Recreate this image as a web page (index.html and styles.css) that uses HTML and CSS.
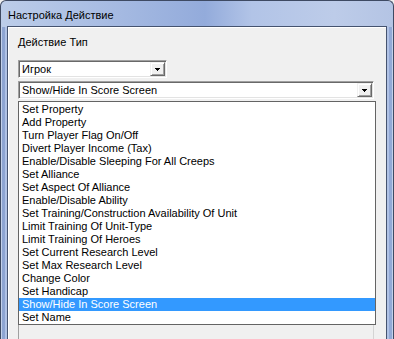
FILE: index.html
```html
<!DOCTYPE html>
<html lang="ru">
<head>
    <meta charset="UTF-8">
    <title>Настройка Действие</title>
    <link rel="stylesheet" href="styles.css">
</head>
<body>

<div class="window">
    <div class="titlebar">Настройка Действие</div>
    <div class="client">
        <div class="label">Действие Тип</div>

        <div class="combo combo-short">
            <span class="combo-text">Игрок</span>
            <span class="combo-btn">
                <svg width="5" height="3" viewBox="0 0 5 3"><path d="M0 0h5v1H0zM1 1h3v1H1zM2 2h1v1H2z" fill="#000"/></svg>
            </span>
        </div>

        <div class="combo-wrap">
            <div class="combo combo-long">
                <span class="combo-text">Show/Hide In Score Screen</span>
                <span class="combo-btn">
                    <svg width="5" height="3" viewBox="0 0 5 3"><path d="M0 0h5v1H0zM1 1h3v1H1zM2 2h1v1H2z" fill="#000"/></svg>
                </span>
            </div>
            <ul class="dropdown">
                <li>Set Property</li>
                <li>Add Property</li>
                <li>Turn Player Flag On/Off</li>
                <li>Divert Player Income (Tax)</li>
                <li>Enable/Disable Sleeping For All Creeps</li>
                <li>Set Alliance</li>
                <li>Set Aspect Of Alliance</li>
                <li>Enable/Disable Ability</li>
                <li>Set Training/Construction Availability Of Unit</li>
                <li>Limit Training Of Unit-Type</li>
                <li>Limit Training Of Heroes</li>
                <li>Set Current Research Level</li>
                <li>Set Max Research Level</li>
                <li>Change Color</li>
                <li>Set Handicap</li>
                <li class="selected">Show/Hide In Score Screen</li>
                <li>Set Name</li>
            </ul>
        </div>

        <div class="memo"></div>
    </div>
</div>

</body>
</html>
```

FILE: styles.css
```css
body { margin: 0; background: #f0f0f0; font-family: "Liberation Sans", Arial, sans-serif; }

/* window frame, win7 basic look */
.window { width: 394px; height: 339px; box-sizing: border-box; overflow: hidden; display: flex; flex-direction: column; padding: 0 6px; border: 1px solid #3e4a63; border-bottom: none; border-radius: 6px 6px 0 0;
    background:
        linear-gradient(90deg, #c3d1ea 0 1px, #8ea5d2 1px 4px, #b0c2e5 4px 6px) left 26px / 6px 100% no-repeat,
        linear-gradient(90deg, #b0c2e5 0 2px, #93a9d6 2px 5px, #c3d1ea 5px 6px) right 26px / 6px 100% no-repeat,
        linear-gradient(90deg, #bccde9 0%, #a9bde3 25%, #93abdb 52%, #b2c4e7 64%, #bdcce9 85%, #b4c4e4 100%); }
.titlebar { height: 22px; padding: 3px 0 0 1px; font-size: 11px; line-height: 22px; color: #000; flex-shrink: 0; }

.client { flex: 1; position: relative; background: #f0f0f0; border: 1px solid #45536f; border-bottom: none; padding: 9px 11px 0 10px; box-shadow: inset 1px 1px 0 #fff; }

.label { font-size: 11px; line-height: 13px; margin-bottom: 11px; }

.combo { height: 18px; box-sizing: border-box; display: flex; align-items: center; justify-content: space-between; background: #fff; border: 1px solid; border-color: #a0a0a0 #fff #fff #a0a0a0; box-shadow: inset 1px 1px 0 #696969, inset -1px -1px 0 #e3e3e3; padding: 1px; }
.combo-short { width: 149px; margin-bottom: 3px; }
.combo-long { width: 356px; }
.combo-text { font-size: 11px; line-height: 14px; padding-left: 2px; white-space: nowrap; }
.combo-btn { width: 15px; height: 14px; box-sizing: border-box; display: flex; align-items: center; justify-content: center; background: #f0f0f0; border: 1px solid; border-color: #f0f0f0 #696969 #696969 #f0f0f0; box-shadow: inset 1px 1px 0 #fff, inset -1px -1px 0 #a0a0a0; }
.combo-btn svg { shape-rendering: crispEdges; display: block; }

.combo-wrap { position: relative; }
.dropdown { position: absolute; top: calc(100% + 2px); left: 0; width: 358px; box-sizing: border-box; margin: 0; padding: 1px 0 0; list-style: none; background: #fff; border: 1px solid #646464; z-index: 2; }
.dropdown li { height: 13px; font-size: 11px; line-height: 13px; padding-left: 3px; white-space: nowrap; color: #000; }
.dropdown li.selected { background: #3399ff; color: #fff; }

.memo { margin-top: 2px; width: 356px; height: 260px; box-sizing: border-box; border: 1px solid; border-color: #a0a0a0 #d4d4d4 #d4d4d4 #a0a0a0; background: #f0f0f0; }
```
